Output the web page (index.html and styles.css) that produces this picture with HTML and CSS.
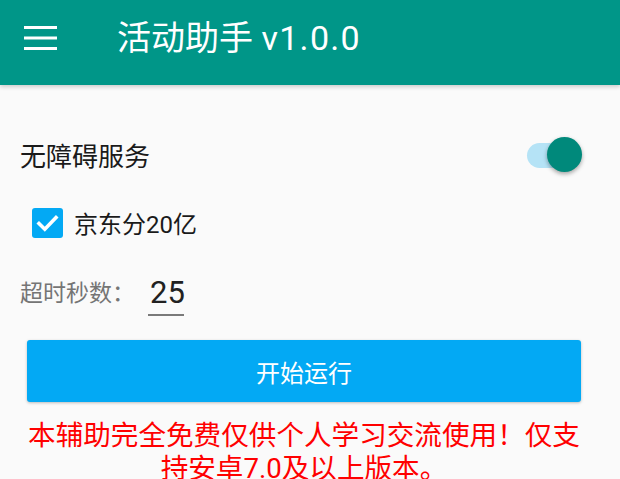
FILE: index.html
```html
<!DOCTYPE html>
<html lang="zh-CN">
<head>
<meta charset="utf-8">
<title>活动助手</title>
<link rel="stylesheet" href="styles.css">
</head>
<body>
<header class="toolbar">
  <svg class="menu-icon" width="33" height="24" viewBox="0 0 33 24" aria-hidden="true">
    <rect x="0" y="0" width="33" height="3" fill="#fff"/>
    <rect x="0" y="10.5" width="33" height="3" fill="#fff"/>
    <rect x="0" y="21" width="33" height="3" fill="#fff"/>
  </svg>
  <h1 class="title">活动助手 <span class="version">v1.0.0</span></h1>
</header>
<main class="content">
  <div class="switch-row">
    <span class="switch-label">无障碍服务</span>
    <span class="switch">
      <span class="switch-track"></span>
      <span class="switch-thumb"></span>
    </span>
  </div>
  <div class="check-row">
    <span class="checkbox">
      <svg width="31" height="30" viewBox="0 0 31 30" aria-hidden="true">
        <path d="M7 15.5 L12.8 21.2 L24 9.5" fill="none" stroke="#fff" stroke-width="3.6" stroke-linecap="square"/>
      </svg>
    </span>
    <span class="check-label">京东分20亿</span>
  </div>
  <div class="time-row">
    <span class="time-label">超时秒数：</span>
    <span class="time-input">25</span>
  </div>
  <button class="start-btn">开始运行</button>
  <p class="notice">本辅助完全免费仅供个人学习交流使用！仅支持安卓7.0及以上版本。</p>
</main>
</body>
</html>
```

FILE: styles.css
```css
* {
  box-sizing: border-box;
}

html, body {
  margin: 0;
  padding: 0;
}

body {
  background: #fafafa;
  font-family: Roboto, "Noto Sans CJK SC", sans-serif;
  color: #212121;
  width: 620px;
  height: 479px;
  overflow: hidden;
}

.toolbar {
  height: 85px;
  background: #009688;
  display: flex;
  align-items: center;
  padding: 0 0 10px 24px;
  box-shadow: 0 2px 4px rgba(0, 0, 0, 0.18);
  position: relative;
}

.menu-icon {
  display: block;
  flex: none;
}

.title {
  margin: 0 0 0 60px;
  font-size: 34px;
  font-weight: 400;
  color: #fff;
  line-height: 40px;
  white-space: nowrap;
}

.version {
  letter-spacing: 1.3px;
}

.content {
  padding: 45px 32px 0 20px;
  display: flex;
  flex-direction: column;
}

.switch-row {
  height: 50px;
  display: flex;
  align-items: center;
  justify-content: space-between;
}

.switch-label {
  font-size: 26px;
  line-height: 30px;
  margin-top: 3px;
  color: #1a1a1a;
}

.switch {
  position: relative;
  width: 55px;
  height: 36px;
  margin-right: 6px;
  flex: none;
}

.switch-track {
  position: absolute;
  left: 0;
  top: 6px;
  width: 52px;
  height: 25px;
  border-radius: 13px;
  background: #b5e3f6;
}

.switch-thumb {
  position: absolute;
  right: 0;
  top: 0;
  width: 35px;
  height: 35px;
  border-radius: 50%;
  background: #00897b;
  box-shadow: 0 2px 4px rgba(0, 0, 0, 0.35);
}

.check-row {
  margin-top: 23px;
  height: 40px;
  display: flex;
  align-items: center;
  padding-left: 12px;
}

.checkbox {
  width: 31px;
  height: 30px;
  border-radius: 3px;
  background: #03a9f4;
  display: block;
  flex: none;
}

.checkbox svg {
  display: block;
}

.check-label {
  margin-left: 11px;
  font-size: 24px;
  line-height: 30px;
  margin-top: 3px;
  color: #1a1a1a;
}

.time-row {
  margin-top: 34px;
  display: flex;
  align-items: flex-start;
}

.time-label {
  font-size: 23px;
  line-height: 33px;
  color: #757575;
}

.time-input {
  margin-left: 13px;
  width: 36px;
  font-size: 31px;
  line-height: 31px;
  padding: 0 0 6px 2px;
  border-bottom: 2px solid #7a7a7a;
  color: #212121;
}

.start-btn {
  margin: 24px 7px 0 7px;
  height: 62px;
  border: none;
  border-radius: 3px;
  background: #03a9f4;
  color: #fff;
  font-family: Roboto, "Noto Sans CJK SC", sans-serif;
  font-size: 24px;
  box-shadow: 0 1px 3px rgba(0, 0, 0, 0.25);
  padding: 0;
}

.notice {
  margin: 17px 7px 0 7px;
  font-size: 27.6px;
  line-height: 33px;
  color: #ff0000;
  text-align: center;
}
```
